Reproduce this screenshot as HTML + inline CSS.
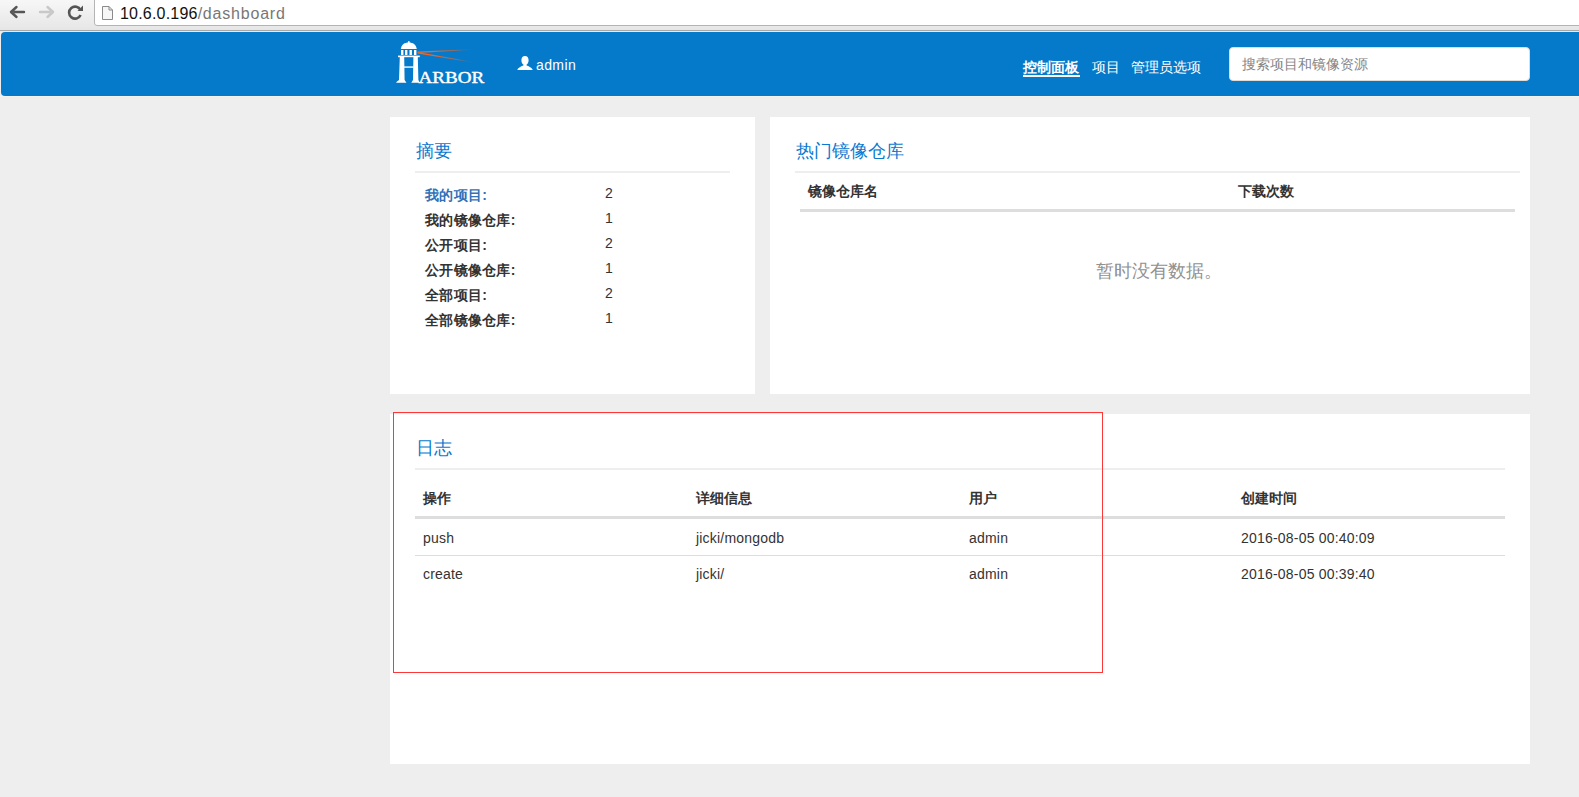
<!DOCTYPE html>
<html><head><meta charset="utf-8">
<style>
*{box-sizing:border-box;}
html,body{margin:0;padding:0;}
body{width:1579px;height:797px;overflow:hidden;position:relative;background:#eeeeee;font-family:"Liberation Sans",sans-serif;color:#333;}
.a{position:absolute;white-space:nowrap;}
#toolbar{left:0;top:0;width:1579px;height:30px;background:linear-gradient(#f7f7f7,#e6e6e6);}
#tline1{left:0;top:30px;width:1579px;height:1px;background:#a8a8a8;}
#tline2{left:0;top:31px;width:1579px;height:1px;background:#eceae8;}
#addr{left:94px;top:-2px;width:1500px;height:28px;background:#fff;border:1px solid #b4b4b4;border-radius:0 0 0 3px;}
#nav{left:1px;top:32px;width:1600px;height:64px;background:#057aca;border-radius:4px 0 0 4px;}
#nline{left:0;top:96px;width:1579px;height:1px;background:#f4f1ee;}
.panel{position:absolute;background:#fff;}
.title{position:absolute;font-size:18px;line-height:20px;color:#0a79cf;}
.hr{position:absolute;height:2px;background:#eee;}
.thl{position:absolute;height:3px;background:#ddd;}
.rl{position:absolute;height:1px;background:#ddd;}
.th{position:absolute;font-size:14px;font-weight:bold;line-height:20px;color:#333;white-space:nowrap;}
.td{position:absolute;font-size:14px;line-height:20px;color:#333;white-space:nowrap;letter-spacing:0.2px;}
.lbl{position:absolute;font-size:14px;font-weight:bold;line-height:20px;color:#333;white-space:nowrap;letter-spacing:0.3px;}
.val{position:absolute;font-size:14px;line-height:20px;color:#333;white-space:nowrap;}
.nl{position:absolute;font-size:14px;line-height:20px;color:#fff;white-space:nowrap;}
</style></head><body>
<!-- browser toolbar -->
<div id="toolbar" class="a"></div>
<div id="tline1" class="a"></div>
<div id="tline2" class="a"></div>
<svg class="a" style="left:0;top:0" width="94" height="30" viewBox="0 0 94 30">
  <path d="M24 12 H14.5 M16.5 7 L11 12 L16.5 17" fill="none" stroke="#555" stroke-width="2.4" stroke-linecap="round" stroke-linejoin="round"/>
  <path d="M40 12 H49.5 M47.5 7 L53 12 L47.5 17" fill="none" stroke="#c8c8c8" stroke-width="2.4" stroke-linecap="round" stroke-linejoin="round"/>
  <path d="M80.5 10 A6 6 0 1 0 80.6 15" fill="none" stroke="#555" stroke-width="2.6"/>
  <path d="M83 5.5 L83 11 L77.5 11 Z" fill="#555"/>
</svg>
<div id="addr" class="a"></div>
<svg class="a" style="left:100px;top:4px" width="16" height="18" viewBox="0 0 16 18">
  <path d="M2.5 2.5 H9 L12.5 6 V15.5 H2.5 Z" fill="#f6f6f6" stroke="#8a8a8a" stroke-width="1"/>
  <path d="M9 2.5 V6 H12.5" fill="none" stroke="#8a8a8a" stroke-width="1"/>
</svg>
<div class="a" style="left:120px;top:4px;font-size:16px;line-height:20px;letter-spacing:0.2px;color:#111;">10.6.0.196<span style="color:#777;letter-spacing:0.8px;">/dashboard</span></div>

<!-- navbar -->
<div id="nav" class="a"></div>
<div id="nline" class="a"></div>

<!-- logo -->
<svg class="a" style="left:390px;top:36px" width="100" height="54" viewBox="0 0 100 54">
  <defs>
    <linearGradient id="beam" x1="0" y1="0" x2="1" y2="0">
      <stop offset="0" stop-color="#f26522"/>
      <stop offset="0.25" stop-color="#f26522" stop-opacity="0.95"/>
      <stop offset="0.65" stop-color="#d8682e" stop-opacity="0.6"/>
      <stop offset="1" stop-color="#057aca" stop-opacity="0"/>
    </linearGradient>
  </defs>
  <!-- knob -->
  <rect x="18" y="5.2" width="1.6" height="1.8" fill="#fff"/>
  <!-- dome -->
  <path d="M10.8 13 C11.5 8.5 14.5 6.5 18.8 6.5 C23 6.5 26 8.5 26.8 13 Z" fill="#fff"/>
  <!-- columns -->
  <rect x="11" y="14" width="2.4" height="5" fill="#fff"/>
  <rect x="15" y="14" width="2.4" height="5" fill="#fff"/>
  <rect x="19.5" y="14" width="2.4" height="5" fill="#fff"/>
  <rect x="24" y="14" width="2.4" height="5" fill="#fff"/>
  <!-- top cap -->
  <rect x="8" y="19.6" width="21.8" height="1.6" fill="#fff"/>
  <!-- H stems -->
  <path d="M9.8 21 L14.2 21 L14.6 44 L15.6 45.5 L16.5 46.8 L6 46.8 L7 45.5 L9 44 Z" fill="#fff"/>
  <path d="M23.4 21 L27.8 21 L28.4 44 L29.8 46.8 L21.3 46.8 L23 44 Z" fill="#fff"/>
  <rect x="14" y="30.2" width="9.6" height="1.8" fill="#fff" fill-opacity="0.75"/>
  <!-- beam -->
  <path d="M27.6 15.6 L88 12.9 L88 13.5 L27.6 17.0 Z" fill="url(#beam)"/>
  <path d="M27.6 16.0 L88 26.8 L88 27.4 L27.6 17.5 Z" fill="url(#beam)"/>
  <text x="28.6" y="46.8" font-family="Liberation Serif" font-size="17.6" fill="#fff" stroke="#fff" stroke-width="0.45" textLength="65.6" lengthAdjust="spacingAndGlyphs">ARBOR</text>
</svg>
<!-- user -->
<svg class="a" style="left:517px;top:55px" width="17" height="16" viewBox="0 0 17 16">
  <path d="M8 1 C10.2 1 11.6 2.6 11.6 5.2 C11.6 7.4 10.7 9 9.6 9.6 L9.6 10.6 C11.6 11.3 14.2 12.5 15.5 14.2 L15.5 15 L0.5 15 L0.5 14.2 C1.8 12.5 4.4 11.3 6.4 10.6 L6.4 9.6 C5.3 9 4.4 7.4 4.4 5.2 C4.4 2.6 5.8 1 8 1 Z" fill="#fff"/>
</svg>
<div class="nl" style="left:536px;top:55px;letter-spacing:0.4px;">admin</div>
<!-- nav links -->
<div class="nl" style="left:1023px;top:57px;font-weight:bold;">控制面板</div>
<div class="a" style="left:1023px;top:75px;width:57px;height:2px;background:#fbf4ef;"></div>
<div class="nl" style="left:1092px;top:57px;">项目</div>
<div class="nl" style="left:1131px;top:57px;">管理员选项</div>
<!-- search -->
<div class="a" style="left:1229px;top:47px;width:301px;height:34px;background:#fff;border:1px solid #e0dcd8;border-radius:4px;"></div>
<div class="a" style="left:1242px;top:54px;font-size:14px;line-height:20px;color:#858585;">搜索项目和镜像资源</div>

<!-- panel 1 -->
<div class="panel" style="left:390px;top:117px;width:365px;height:277px;"></div>
<div class="title" style="left:416px;top:141px;">摘要</div>
<div class="hr" style="left:415px;top:171px;width:315px;"></div>
<div class="lbl" style="left:425px;top:185px;color:#3371b8;">我的项目:</div>
<div class="lbl" style="left:425px;top:210px;">我的镜像仓库:</div>
<div class="lbl" style="left:425px;top:235px;">公开项目:</div>
<div class="lbl" style="left:425px;top:260px;">公开镜像仓库:</div>
<div class="lbl" style="left:425px;top:285px;">全部项目:</div>
<div class="lbl" style="left:425px;top:310px;">全部镜像仓库:</div>
<div class="val" style="left:605px;top:183px;">2</div>
<div class="val" style="left:605px;top:208px;">1</div>
<div class="val" style="left:605px;top:233px;">2</div>
<div class="val" style="left:605px;top:258px;">1</div>
<div class="val" style="left:605px;top:283px;">2</div>
<div class="val" style="left:605px;top:308px;">1</div>

<!-- panel 2 -->
<div class="panel" style="left:770px;top:117px;width:760px;height:277px;"></div>
<div class="title" style="left:796px;top:141px;">热门镜像仓库</div>
<div class="hr" style="left:795px;top:171px;width:725px;"></div>
<div class="th" style="left:808px;top:181px;">镜像仓库名</div>
<div class="th" style="left:1238px;top:181px;">下载次数</div>
<div class="thl" style="left:800px;top:209px;width:715px;"></div>
<div class="a" style="left:1096px;top:261px;font-size:18px;line-height:20px;color:#919191;">暂时没有数据。</div>

<!-- log panel -->
<div class="panel" style="left:390px;top:414px;width:1140px;height:350px;"></div>
<div class="title" style="left:416px;top:438px;">日志</div>
<div class="hr" style="left:415px;top:468px;width:1090px;"></div>
<div class="th" style="left:423px;top:488px;">操作</div>
<div class="th" style="left:696px;top:488px;">详细信息</div>
<div class="th" style="left:969px;top:488px;">用户</div>
<div class="th" style="left:1241px;top:488px;">创建时间</div>
<div class="thl" style="left:415px;top:516px;width:1090px;"></div>
<div class="td" style="left:423px;top:528px;">push</div>
<div class="td" style="left:696px;top:528px;">jicki/mongodb</div>
<div class="td" style="left:969px;top:528px;">admin</div>
<div class="td" style="left:1241px;top:528px;">2016-08-05 00:40:09</div>
<div class="rl" style="left:415px;top:555px;width:1090px;"></div>
<div class="td" style="left:423px;top:564px;">create</div>
<div class="td" style="left:696px;top:564px;">jicki/</div>
<div class="td" style="left:969px;top:564px;">admin</div>
<div class="td" style="left:1241px;top:564px;">2016-08-05 00:39:40</div>

<!-- red annotation box -->
<div class="a" style="left:393px;top:412px;width:710px;height:261px;border:1px solid #fc3838;"></div>
</body></html>
